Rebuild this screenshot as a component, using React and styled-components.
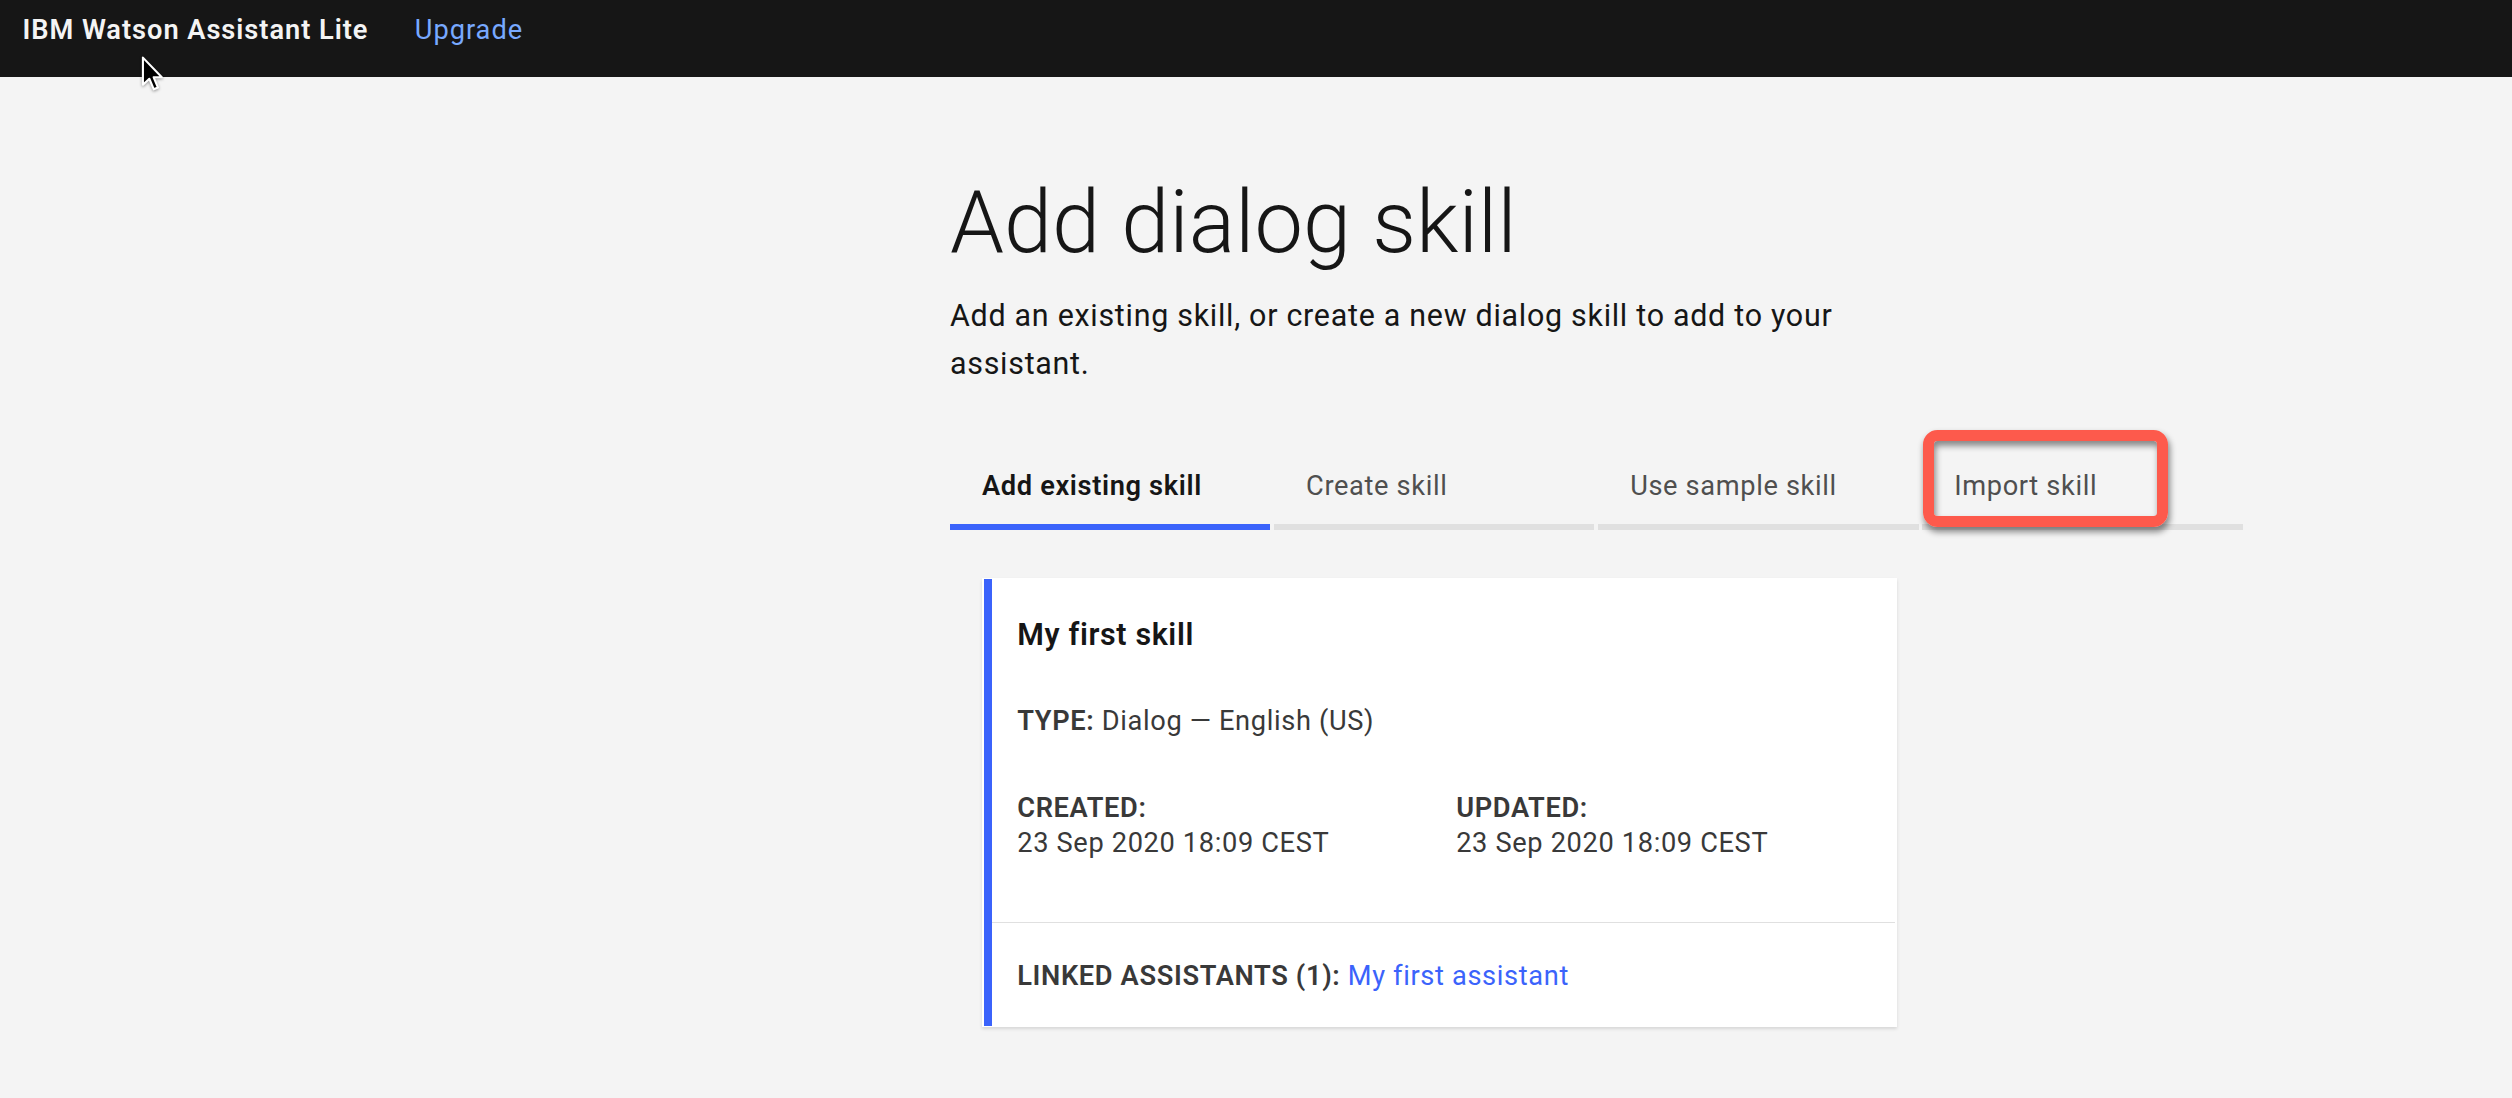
import React from "react";
import styled, { createGlobalStyle } from "styled-components";

const BLUE = "#3b63fb";

const GlobalStyle = createGlobalStyle`
  html, body {
    margin: 0;
    padding: 0;
    background: #f4f4f4;
  }
  body {
    font-family: Roboto, "Liberation Sans", Arial, sans-serif;
    -webkit-font-smoothing: antialiased;
  }
  * { box-sizing: border-box; }
`;

const Page = styled.div`
  zoom: 1.602;
  min-height: 686px;
  background: #f4f4f4;
`;

const Header = styled.header`
  position: relative;
  height: 48px;
  background: #161616;
  display: flex;
  align-items: flex-start;
  gap: 29px;
  padding: 8px 0 0 14px;
`;

const Brand = styled.span`
  color: #f4f4f4;
  font-size: 17px;
  line-height: 22px;
  letter-spacing: 0.6px;
  font-weight: 600;
`;

const UpgradeLink = styled.a`
  color: #78a9ff;
  font-size: 17px;
  line-height: 22px;
  letter-spacing: 0.6px;
  text-decoration: none;
`;

const Cursor = styled.svg`
  position: absolute;
  left: 88px;
  top: 35px;
  width: 14px;
  height: 23px;
  filter: drop-shadow(0 1px 1px rgba(0, 0, 0, 0.4));
  z-index: 5;
`;

const Main = styled.main`
  padding: 59.5px 0 40px 593px;
`;

const Title = styled.h1`
  margin: 0;
  font-size: 54px;
  line-height: 64px;
  font-weight: 300;
  color: #161616;
`;

const Lead = styled.p`
  margin: 10.5px 0 0;
  max-width: 590px;
  font-size: 19px;
  line-height: 30px;
  letter-spacing: 0.45px;
  font-weight: 400;
  color: #161616;
`;

const TabList = styled.div`
  position: relative;
  display: flex;
  gap: 2.3px;
  margin-top: 49px;
`;

const Tab = styled.button`
  all: unset;
  box-sizing: border-box;
  width: 200px;
  padding: 1.5px 20px 12.5px;
  font-family: inherit;
  font-size: 17px;
  line-height: 22px;
  letter-spacing: 0.4px;
  cursor: pointer;
  color: ${(p) => (p.$active ? "#161616" : "#4f4f4f")};
  font-weight: ${(p) => (p.$active ? 600 : 400)};
  border-bottom: 4px solid ${(p) => (p.$active ? BLUE : "#e0e0e0")};
`;

const Highlight = styled.div`
  position: absolute;
  left: 607.6px;
  top: -22.6px;
  width: 153px;
  height: 60.5px;
  border: 6.9px solid #fd5a4c;
  border-radius: 9px;
  box-shadow: 1px 3px 4px rgba(0, 0, 0, 0.45),
    inset 1px 3px 4px rgba(0, 0, 0, 0.45);
  pointer-events: none;
`;

const Card = styled.section`
  display: flex;
  width: 571px;
  margin: 30px 0 0 20px;
  padding: 1px;
  background: #ffffff;
  box-shadow: 0 1px 2px rgba(0, 0, 0, 0.12);
`;

const Accent = styled.div`
  flex: none;
  width: 5px;
  background: ${BLUE};
`;

const CardBody = styled.div`
  flex: 1;
  display: flex;
  flex-direction: column;
`;

const Summary = styled.div`
  padding: 23px 16px 38px;
`;

const SkillName = styled.h2`
  margin: 0;
  font-size: 19px;
  line-height: 24px;
  letter-spacing: 0.4px;
  font-weight: 600;
  color: #161616;
`;

const InfoLine = styled.p`
  margin: ${(p) => p.$mt || 0}px 0 0;
  font-size: 17px;
  line-height: 22px;
  letter-spacing: 0.4px;
  color: #393939;
`;

const Label = styled.strong`
  font-weight: 600;
  color: #393939;
`;

const Dates = styled.div`
  display: grid;
  grid-template-columns: 274px 1fr;
  margin-top: 32px;
`;

const DateBlock = styled.div`
  font-size: 17px;
  line-height: 22px;
  letter-spacing: 0.4px;
  color: #393939;
  display: flex;
  flex-direction: column;
`;

const Footer = styled.div`
  border-top: 1px solid #e0e0e0;
  padding: 22px 16px 20px;
  font-size: 17px;
  line-height: 22px;
  letter-spacing: 0.4px;
  color: #393939;
`;

const AssistantLink = styled.a`
  color: ${BLUE};
  text-decoration: none;
`;

const tabs = ["Add existing skill", "Create skill", "Use sample skill", "Import skill"];

export default function App() {
  return (
    <>
      <GlobalStyle />
      <Page>
        <Header>
          <Brand>IBM Watson Assistant Lite</Brand>
          <UpgradeLink href="#">Upgrade</UpgradeLink>
          <Cursor viewBox="0 0 14 23">
            <path
              d="M1.2 1 L1.2 18 L5.2 14.2 L8 20.8 L10.6 19.7 L7.9 13.3 L13 13.3 Z"
              fill="#000"
              stroke="#fff"
              strokeWidth="1.3"
              strokeLinejoin="round"
            />
          </Cursor>
        </Header>
        <Main>
          <Title>Add dialog skill</Title>
          <Lead>
            Add an existing skill, or create a new dialog skill to add to your assistant.
          </Lead>
          <TabList>
            {tabs.map((t, i) => (
              <Tab key={t} $active={i === 0}>
                {t}
              </Tab>
            ))}
            <Highlight />
          </TabList>
          <Card>
            <Accent />
            <CardBody>
              <Summary>
                <SkillName>My first skill</SkillName>
                <InfoLine $mt={31}>
                  <Label>TYPE:</Label> Dialog — English (US)
                </InfoLine>
                <Dates>
                  <DateBlock>
                    <Label>CREATED:</Label>
                    <span>23 Sep 2020 18:09 CEST</span>
                  </DateBlock>
                  <DateBlock>
                    <Label>UPDATED:</Label>
                    <span>23 Sep 2020 18:09 CEST</span>
                  </DateBlock>
                </Dates>
              </Summary>
              <Footer>
                <Label>LINKED ASSISTANTS (1):</Label>{" "}
                <AssistantLink href="#">My first assistant</AssistantLink>
              </Footer>
            </CardBody>
          </Card>
        </Main>
      </Page>
    </>
  );
}
